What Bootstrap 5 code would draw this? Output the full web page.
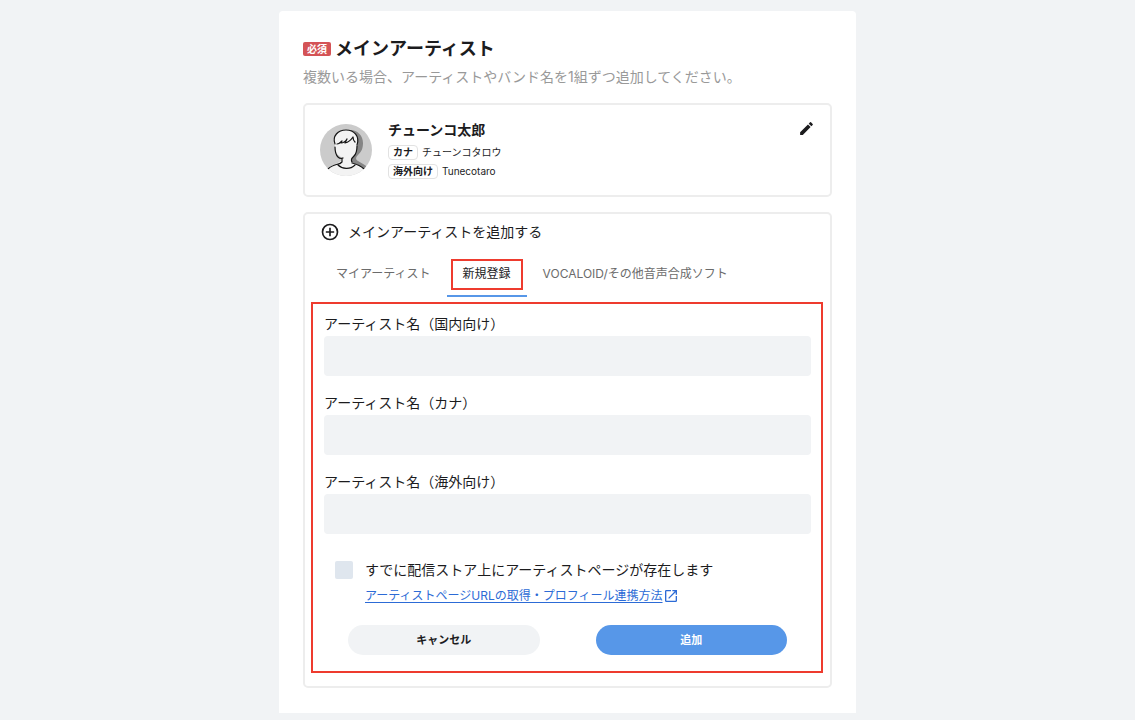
<!DOCTYPE html>
<html lang="ja">
<head>
<meta charset="utf-8">
<meta name="viewport" content="width=device-width, initial-scale=1">
<title>メインアーティスト</title>
<link href="https://cdn.jsdelivr.net/npm/bootstrap@5.3.0/dist/css/bootstrap.min.css" rel="stylesheet">
<style>
  body { background: #f1f3f5; color: #1c1c1e; font-family: Inter, "Noto Sans CJK JP", sans-serif; font-size: 14px; line-height: 24px; }
  .sheet { max-width: 577px; margin: 11px auto 7px; padding: 24px 24px 25px; background: #fff; border-radius: 4px 4px 0 0; }
  .sheet-title { font-size: 18px; line-height: 28px; font-weight: 700; }
  .need-tag { background: #d45356; color: #fff; font-size: 10px; line-height: 14px; font-weight: 700; padding: 0 4px; border-radius: 2px; }
  .hint { color: #999; line-height: 20px; }
  .panel { border: 2px solid #ededed; border-radius: 5px; }
  .artist-panel { padding: 15px 15px 16px; margin-bottom: 15px; }
  .artist-name { font-size: 14px; line-height: 20px; font-weight: 700; margin: 0 0 5px; }
  .meta-row { font-size: 10px; line-height: 15px; }
  .meta-tag { border: 1px solid #e2e2e2; border-radius: 4px; padding: 0 4px; line-height: 13px; font-weight: 700; }
  .icon-btn { color: #1c1c1e; line-height: 1; }
  .icon-btn svg { display: block; }
  .add-panel { padding: 6px 7px 13px 6px; }
  .add-head { padding-left: 9px; gap: 8px; }
  .tabs { margin: 15px 0 5px; padding-left: 9px; }
  .tabs .nav-link { padding: 0 4px 5px; background: transparent; border: 0; border-bottom: 2px solid transparent; border-radius: 0; color: #6b6b6b; font-size: 12px; line-height: 24px; }
  .tabs .nav-link span { display: block; border: 2px solid transparent; padding: 1px 10px 2px; }
  .tabs .nav-link.active { color: #1c1c1e; border-bottom-color: #5797e8; }
  .tabs .nav-link.active span { border-color: #ee3b2e; }
  .entry { border: 2px solid #ee3b2e; padding: 8px 10px 16px 11px; }
  .entry .form-label { display: block; margin: 0; }
  .entry .form-control { height: 40px; background: #f1f3f5; border: 0; border-radius: 4px; }
  .field { margin-bottom: 15px; }
  .exists { margin: 24px 0 4px; padding-left: 11px; gap: 12px; }
  .exists .form-check-input { width: 18px; height: 18px; margin: 0; background-color: #dfe6ee; border: 0; border-radius: 2px; }
  .exists .form-check-input:checked { background-color: #5797e8; }
  .guide { margin-left: 41px; font-size: 12px; line-height: 20px; color: #2c6bd6; }
  .guide-text { text-decoration: underline; text-underline-offset: 2px; }
  .actions { margin: 19px 24px 0; gap: 56px; }
  .actions .btn { flex: 1 1 0; height: 30px; padding: 0; border: 0; font-size: 11px; font-weight: 700; }
  .btn-cancel, .btn-cancel:hover { background: #f1f3f5; color: #1c1c1e; }
  .btn-add, .btn-add:hover { background: #5797e8; color: #fff; }
</style>
</head>
<body>
<main class="sheet">
  <div class="d-flex align-items-center gap-1">
    <span class="need-tag">必須</span>
    <h1 class="sheet-title m-0">メインアーティスト</h1>
  </div>
  <p class="hint mt-1 mb-3">複数いる場合、アーティストやバンド名を1組ずつ追加してください。</p>

  <section class="panel artist-panel d-flex">
    <svg class="flex-shrink-0 mt-1" width="52" height="52" viewBox="0 0 52 52" aria-hidden="true">
      <defs><clipPath id="round"><circle cx="26" cy="26" r="26"/></clipPath></defs>
      <g clip-path="url(#round)">
        <rect width="52" height="52" fill="#cbcbcb"/>
        <path d="M30 6c8 0 13 6 13 13 0 6-2 9-5 12-3 3-2 5 0 6 3 2 8 4 11 8H30z" fill="#858585"/>
        <path d="M7 45c4-4 10-5 14-8 1-2 0-3-1-5-4-2-5-6-5-10-3-9 2-16 11-16s14 7 11 16c0 3 0 7-4 11-3 3-2 5 0 6 3 1 8 3 11 6v8H7z" fill="#f3f3f3"/>
        <g fill="none" stroke="#151515" stroke-width="1.2" stroke-linecap="round" stroke-linejoin="round">
          <path d="M15 20c-3-8 3-14 11-14s14 6 11 15M15 23c0 5 1 8 3 10 2 2 3 2 5 1M37 22c0 5-1 8-3 10-3 3-3 4-2 6M22 34v4c-1 1-2 2-4 2-4 1-8 3-10 5M32 39c4 1 9 3 12 6M18 41c4 4 12 5 17 0"/>
          <path d="M17 20c2 0 4-2 5-3l-1 2c2 0 4-1 6-4l-2 4c4-1 6-3 8-6 0 2 1 4 2 5"/>
        </g>
      </g>
    </svg>
    <div class="flex-grow-1 ms-3">
      <h2 class="artist-name">チューンコ太郎</h2>
      <div class="meta-row d-flex align-items-center gap-1 mb-1"><span class="meta-tag">カナ</span>チューンコタロウ</div>
      <div class="meta-row d-flex align-items-center gap-1"><span class="meta-tag">海外向け</span>Tunecotaro</div>
    </div>
    <button type="button" class="btn icon-btn p-0 border-0 align-self-start" aria-label="編集">
      <svg width="17" height="17" viewBox="0 0 24 24" fill="currentColor" aria-hidden="true"><path d="M3 17.25V21h3.75L17.81 9.94l-3.75-3.75L3 17.25zM20.71 7.04a1 1 0 0 0 0-1.41l-2.34-2.34a1 1 0 0 0-1.41 0l-1.83 1.83 3.75 3.75 1.83-1.83z"/></svg>
    </button>
  </section>

  <section class="panel add-panel">
    <div class="add-head d-flex align-items-center">
      <svg width="20" height="20" viewBox="0 0 24 24" fill="currentColor" aria-hidden="true"><path d="M13 7h-2v4H7v2h4v4h2v-4h4v-2h-4V7zm-1-5a10 10 0 1 0 0 20 10 10 0 0 0 0-20zm0 18a8 8 0 1 1 0-16 8 8 0 0 1 0 16z"/></svg>
      <span>メインアーティストを追加する</span>
    </div>

    <div class="tabs nav" role="tablist">
      <button type="button" class="nav-link" role="tab" aria-selected="false"><span>マイアーティスト</span></button>
      <button type="button" class="nav-link active" role="tab" aria-selected="true"><span>新規登録</span></button>
      <button type="button" class="nav-link" role="tab" aria-selected="false"><span>VOCALOID/その他音声合成ソフト</span></button>
    </div>

    <form class="entry">
      <div class="field">
        <label class="form-label" for="name-jp">アーティスト名（国内向け）</label>
        <input class="form-control" id="name-jp" type="text">
      </div>
      <div class="field">
        <label class="form-label" for="name-kana">アーティスト名（カナ）</label>
        <input class="form-control" id="name-kana" type="text">
      </div>
      <div>
        <label class="form-label" for="name-en">アーティスト名（海外向け）</label>
        <input class="form-control" id="name-en" type="text">
      </div>
      <div class="exists d-flex align-items-center">
        <input class="form-check-input" type="checkbox" id="exists">
        <label for="exists">すでに配信ストア上にアーティストページが存在します</label>
      </div>
      <a class="guide d-flex align-items-center text-decoration-none" href="#"><span class="guide-text">アーティストページURLの取得・プロフィール連携方法</span><svg width="16" height="16" viewBox="0 0 24 24" fill="currentColor" aria-hidden="true"><path d="M19 19H5V5h7V3H5a2 2 0 0 0-2 2v14a2 2 0 0 0 2 2h14a2 2 0 0 0 2-2v-7h-2v7zM14 3v2h3.59l-9.83 9.83 1.41 1.41L19 6.41V10h2V3h-7z"/></svg></a>
      <div class="actions d-flex">
        <button type="button" class="btn btn-cancel rounded-pill">キャンセル</button>
        <button type="button" class="btn btn-add rounded-pill">追加</button>
      </div>
    </form>
  </section>
</main>
<script src="https://cdn.jsdelivr.net/npm/bootstrap@5.3.0/dist/js/bootstrap.bundle.min.js"></script>
</body>
</html>
